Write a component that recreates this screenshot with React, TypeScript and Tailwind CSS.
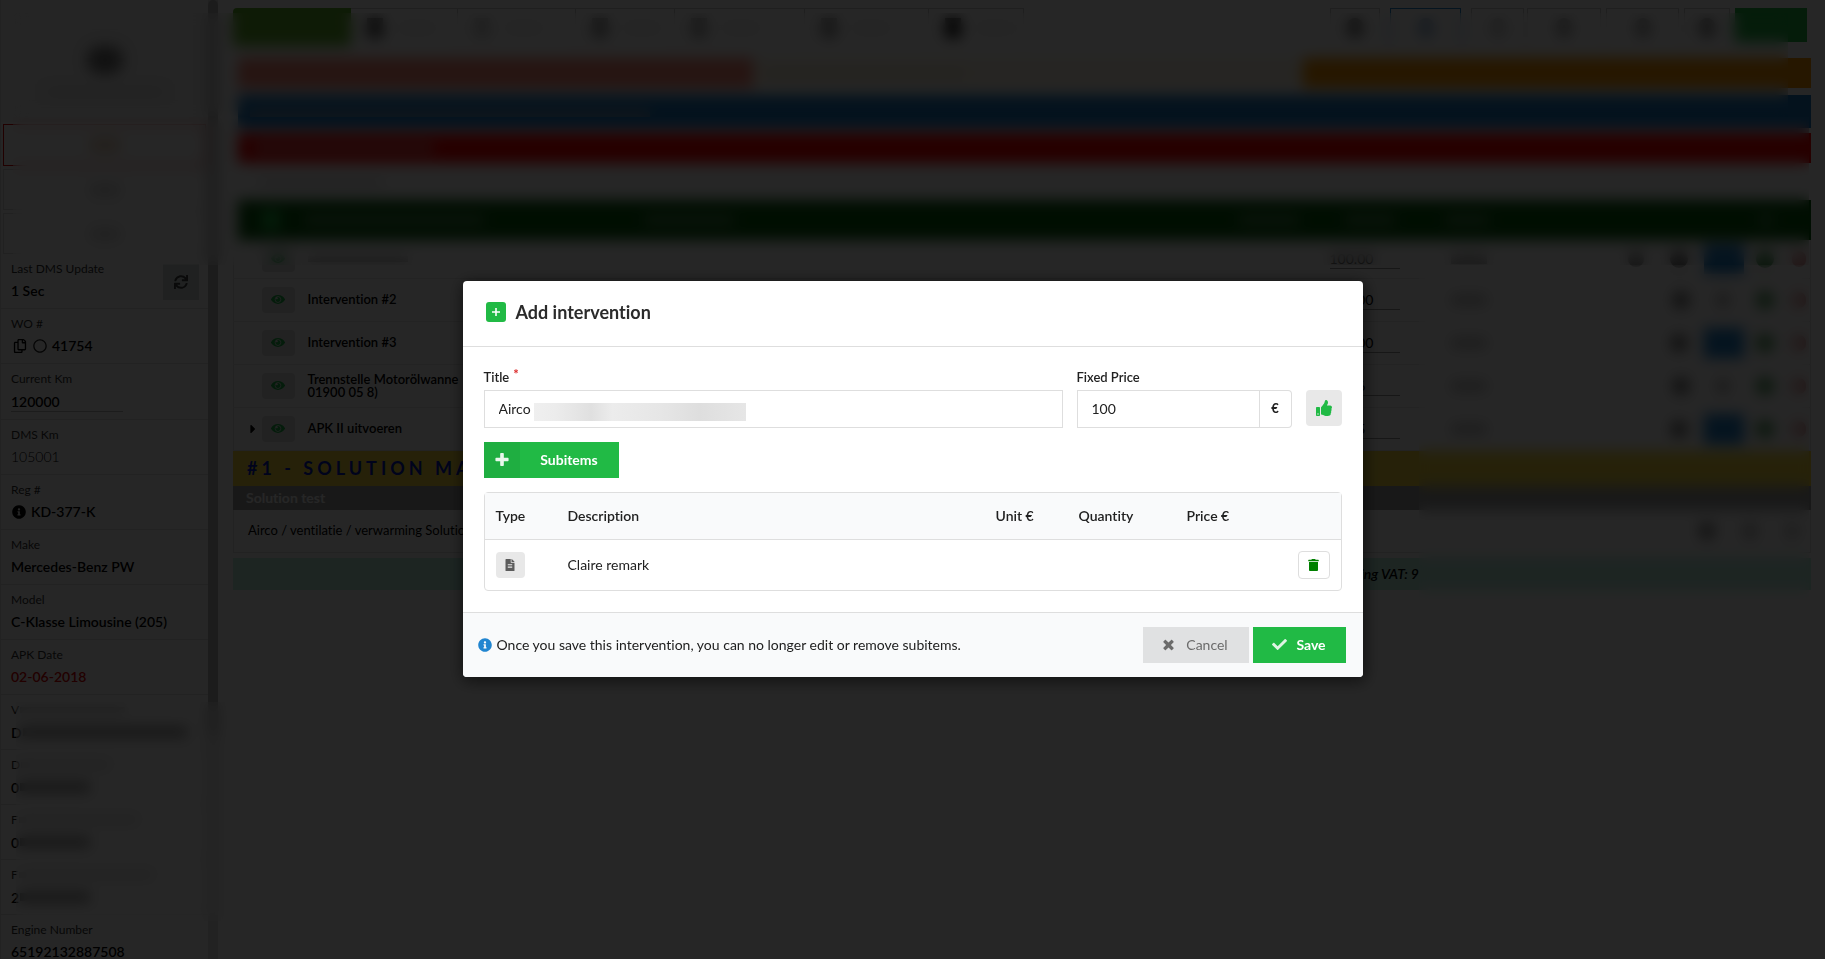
import React from "react";
import { FaSync, FaRegCopy, FaRegCircle, FaInfoCircle, FaCaretRight, FaThumbsUp, FaFileAlt, FaCheck } from "react-icons/fa";

const PLUS =
  "M448 294.2v-76.4c0-13.3-10.7-24-24-24H286.2V56c0-13.3-10.7-24-24-24h-76.4c-13.3 0-24 10.7-24 24v137.8H24c-13.3 0-24 10.7-24 24v76.4c0 13.3 10.7 24 24 24h137.8V456c0 13.3 10.7 24 24 24h76.4c13.3 0 24-10.7 24-24V318.2H424c13.3 0 24-10.7 24-24z";
const TIMES =
  "M323.1 441l53.9-53.9c9.4-9.4 9.4-24.5 0-33.9L279.8 256l97.2-97.2c9.4-9.4 9.4-24.5 0-33.9L323.1 71c-9.4-9.4-24.5-9.4-33.9 0L192 168.2 94.8 71c-9.4-9.4-24.5-9.4-33.9 0L7 124.9c-9.4 9.4-9.4 24.5 0 33.9l97.2 97.2L7 353.2c-9.4 9.4-9.4 24.5 0 33.9L60.9 441c9.4 9.4 24.5 9.4 33.9 0l97.2-97.2 97.2 97.2c9.3 9.3 24.5 9.3 33.9 0z";
const TRASH =
  "M0 84V56c0-13.3 10.7-24 24-24h112l9.4-18.7c4-8.2 12.3-13.3 21.4-13.3h114.3c9.1 0 17.4 5.1 21.5 13.3L312 32h112c13.3 0 24 10.7 24 24v28c0 6.6-5.4 12-12 12H12C5.4 96 0 90.6 0 84zm416 56v324c0 26.5-21.5 48-48 48H80c-26.5 0-48-21.5-48-48V140c0-6.6 5.4-12 12-12h360c6.6 0 12 5.4 12 12z";
const EYE =
  "M569.354 231.631C512.969 135.949 407.81 72 288 72 168.14 72 63.004 135.994 6.646 231.631a47.999 47.999 0 0 0 0 48.739C63.031 376.051 168.19 440 288 440c119.86 0 224.996-63.994 281.354-159.631a47.997 47.997 0 0 0 0-48.738zM288 392c-75.162 0-136-60.827-136-136 0-75.162 60.826-136 136-136 75.162 0 136 60.826 136 136 0 75.162-60.826 136-136 136zm104-136c0 57.438-46.562 104-104 104s-104-46.562-104-104c0-17.708 4.431-34.379 12.236-48.973l-.001.032c0 23.651 19.173 42.823 42.824 42.823s42.824-19.173 42.824-42.823c0-23.651-19.173-42.824-42.824-42.824l-.032.001C253.621 156.431 270.292 152 288 152c57.438 0 104 46.562 104 104z";

function Glyph({ d, box, className }: { d: string; box: string; className: string }) {
  return (
    <svg viewBox={box} fill="currentColor" aria-hidden="true" className={className}>
      <path d={d} />
    </svg>
  );
}

function Fact({ label, children }: { label: string; children: React.ReactNode }) {
  return (
    <div className="h-[55px] shrink-0 border-b border-[#e0e0e0] px-[10px] pt-[6px]">
      <div className="text-[12px] leading-[18px] text-[#333]">{label}</div>
      <div className="mt-[3px] flex h-[20px] items-center gap-[5px] text-[14px] font-semibold leading-[20px]">{children}</div>
    </div>
  );
}

function HiddenFact({ label, value, labelWidth, valueWidth }: { label: string; value: string; labelWidth: string; valueWidth: string }) {
  return (
    <div className="h-[55px] shrink-0 border-b border-[#e0e0e0] px-[10px] pt-[6px]">
      <div className="flex h-[18px] items-center gap-px text-[12px] text-[#333]">
        {label}
        <span className={"h-[6px] bg-[#ccc] " + labelWidth} />
      </div>
      <div className="mt-[3px] flex h-[20px] items-center gap-px text-[14px] font-semibold">
        {value}
        <span className={"h-[8px] bg-[#777] " + valueWidth} />
      </div>
    </div>
  );
}

function Sidebar() {
  return (
    <aside className="flex h-full w-[208px] shrink-0 flex-col overflow-hidden border-l border-[#e0e0e0]">
      <div className="flex h-[122px] shrink-0 flex-col items-center bg-[#f3f3f3] pt-[46px]">
        <div className="h-[28px] w-[36px] rounded-full bg-[#777]" />
        <div className="mt-[14px] h-[8px] w-[120px] bg-[#ddd]" />
      </div>
      <div className="flex shrink-0 flex-col gap-[3px] px-[2px] pt-[2px]">
        <div className="flex h-[42px] items-center justify-center border border-[#d00]">
          <span className="h-[14px] w-[30px] bg-[#ecd0b8]" />
        </div>
        <div className="flex h-[41px] items-center justify-center border border-[#ddd]">
          <span className="h-[10px] w-[30px] bg-[#ccc]" />
        </div>
        <div className="flex h-[41px] items-center justify-center border border-[#ddd]">
          <span className="h-[10px] w-[30px] bg-[#ccc]" />
        </div>
      </div>
      <div className="flex h-[55px] shrink-0 justify-between border-b border-[#e0e0e0] pl-[10px] pr-[9px] pt-[6px]">
        <div>
          <div className="text-[12px] leading-[18px] text-[#333]">Last DMS Update</div>
          <div className="mt-[3px] text-[14px] font-semibold leading-[20px]">1 Sec</div>
        </div>
        <button aria-label="Refresh" className="mt-[4px] flex h-[36px] w-[36px] items-center justify-center bg-[#d3dfdd] text-[#444]">
          <FaSync size={14} />
        </button>
      </div>
      <Fact label="WO #">
        <FaRegCopy size={14} className="ml-[2px] mr-px" />
        <FaRegCircle size={14} className="text-[#222]" />
        41754
      </Fact>
      <div className="h-[56px] shrink-0 border-b border-[#e0e0e0] px-[10px] pt-[6px]">
        <label htmlFor="current-km" className="block text-[12px] leading-[18px] text-[#333]">Current Km</label>
        <input id="current-km" defaultValue="120000" className="mt-[3px] block h-[21px] w-[112px] border-b border-[#bbb] bg-transparent text-[14px] font-semibold" />
      </div>
      <Fact label="DMS Km">
        <span className="font-light">105001</span>
      </Fact>
      <Fact label="Reg #">
        <FaInfoCircle size={14} className="ml-px" />
        KD-377-K
      </Fact>
      <Fact label="Make">Mercedes-Benz PW</Fact>
      <Fact label="Model">C-Klasse Limousine (205)</Fact>
      <Fact label="APK Date">
        <span className="text-[#e00000]">02-06-2018</span>
      </Fact>
      <HiddenFact label="V" value="D" labelWidth="w-[105px]" valueWidth="w-[164px]" />
      <HiddenFact label="D" value="0" labelWidth="w-[90px]" valueWidth="w-[70px]" />
      <HiddenFact label="F" value="0" labelWidth="w-[120px]" valueWidth="w-[70px]" />
      <HiddenFact label="F" value="2" labelWidth="w-[135px]" valueWidth="w-[70px]" />
      <Fact label="Engine Number">65192132887508</Fact>
    </aside>
  );
}

function Actions({ assigned, first }: { assigned: boolean; first?: boolean }) {
  return (
    <div className="flex items-center justify-end">
      {first && <span className="mr-[26px] h-[16px] w-[16px] rounded-full bg-[#999]" />}
      <span className="mr-[16px] h-[18px] w-[18px] rounded-full bg-[#777]" />
      {assigned ? <span className="mr-[12px] h-[30px] w-[40px] bg-[#2185d0]" /> : <span className="mr-[26px] ml-[10px] h-[14px] w-[14px] rounded-full bg-[#aaa]" />}
      <span className="mr-[18px] h-[18px] w-[18px] rounded-full bg-[#4c9a58]" />
      <span className="mr-[4px] h-[16px] w-[14px] rounded-full bg-[#e09a9a]" />
    </div>
  );
}

const interventions = [
  { title: "", price: "100.00", assigned: true, open: false },
  { title: "Intervention #2", price: "100.00", assigned: false, open: false },
  { title: "Intervention #3", price: "100.00", assigned: true, open: false },
  { title: "Trennstelle Motorölwanne\n01900 05 8)", price: "53.66", assigned: false, open: false },
  { title: "APK II uitvoeren", price: "29.95", assigned: true, open: true },
];

const tools = [
  { width: "w-[107px]", icon: "bg-[#555]" },
  { width: "w-[118px]", icon: "bg-[#ccc]" },
  { width: "w-[99px]", icon: "bg-[#999]" },
  { width: "w-[130px]", icon: "bg-[#aaa]" },
  { width: "w-[124px]", icon: "bg-[#999]" },
  { width: "w-[95px]", icon: "bg-[#222]" },
];

const options = [
  { width: "w-[50px]", look: "mr-[10px] border-[#ccc]", icon: "bg-[#777]" },
  { width: "w-[71px]", look: "mr-[10px] border-[#2185d0]", icon: "bg-[#9ab8d8]" },
  { width: "w-[53px]", look: "mr-[3px] border-[#ccc]", icon: "bg-[#ccc]" },
  { width: "w-[74px]", look: "mr-[5px] border-[#ccc]", icon: "bg-[#aaa]" },
  { width: "w-[73px]", look: "mr-[5px] border-[#ccc]", icon: "bg-[#aaa]" },
  { width: "w-[46px]", look: "mr-[5px] border-[#ccc]", icon: "bg-[#888]" },
];

function Workspace() {
  return (
    <main className="min-w-0 flex-1 pl-[15px] pr-[14px]">
      <div className="flex h-[49px] justify-between pr-[4px] pt-[8px]">
        <div className="flex h-[38px]">
          <div className="w-[118px] rounded-tl bg-[#62b32a]" />
          {tools.map((tool, i) => (
            <div key={i} className={"flex items-center gap-[16px] border-r border-t border-[#ccc] pl-[16px] " + tool.width}>
              <span className={"h-[20px] w-[16px] " + tool.icon} />
              <span className="h-[6px] w-[36px] bg-[#ddd]" />
            </div>
          ))}
        </div>
        <div className="flex h-[38px]">
          {options.map((option, i) => (
            <div key={i} className={"flex items-center justify-center border-x border-t " + option.width + " " + option.look}>
              <span className={"h-[20px] w-[16px] rounded-full " + option.icon} />
            </div>
          ))}
          <div className="h-[34px] w-[72px] bg-[#21ba45]" />
        </div>
      </div>
      <div className="pl-[5px] pt-[9px]">
        <div className="flex h-[30px]">
          <div className="flex-[519] bg-[#ff8876]" />
          <div className="flex flex-[542] items-center bg-[#fff7e6] pl-[12px]">
            <span className="h-[6px] w-[200px] bg-[#e2d8c4]" />
          </div>
          <div className="flex-[512] bg-[#ff9900]" />
        </div>
        <div className="mt-[7px] flex h-[33px] items-center bg-[#1b7ac4] pl-[12px]">
          <span className="h-[10px] w-[400px] bg-[#5a8cba]" />
        </div>
        <div className="mt-[5px] flex h-[30px] items-center bg-[#ff0000] pl-[16px]">
          <span className="h-[10px] w-[180px] bg-[#e06060]" />
        </div>
        <div className="flex h-[37px] items-center pl-[20px]">
          <span className="h-[6px] w-[126px] bg-[#d6d6d6]" />
        </div>
        <div className="flex h-[40px] items-center bg-[#065e0c]">
          <span className="ml-[24px] h-[20px] w-[18px] bg-[#21ba45]" />
          <span className="ml-[24px] h-[8px] w-[180px] bg-[#5a8f5c]" />
          <span className="ml-[160px] h-[8px] w-[90px] bg-[#5a8f5c]" />
          <span className="ml-auto mr-[46px] h-[8px] w-[60px] bg-[#5a8f5c]" />
          <span className="mr-[50px] h-[8px] w-[50px] bg-[#5a8f5c]" />
          <span className="mr-[270px] h-[8px] w-[44px] bg-[#5a8f5c]" />
          <span className="mr-[38px] h-[8px] w-[14px] bg-[#5a8f5c]" />
        </div>
      </div>
      <table className="w-full table-fixed border-x border-[#e0e0e0] text-left">
        <tbody>
          {interventions.map((row, i) => (
            <tr key={i} className={"border-b border-[#e8e8e8] " + (i === 0 ? "h-[38px]" : "h-[43px]")}>
              <td className="w-[28px] pl-[12px]">{row.open && <FaCaretRight size={14} />}</td>
              <td className="w-[46px]">
                <button aria-label="Toggle visibility" className="flex h-[26px] w-[33px] items-center justify-center rounded bg-[#e4e4e4] text-[#1db849]">
                  <Glyph d={EYE} box="0 0 576 512" className="h-[13px] w-[14px]" />
                </button>
              </td>
              <td className="whitespace-pre text-[13px] font-semibold leading-[13px]">
                {row.title || <span className="block h-[6px] w-[100px] bg-[#bbb]" />}
              </td>
              <td className="w-[121px]">
                <input aria-label="Unit price" defaultValue={row.price} className="block h-[20px] w-[70px] border-b border-[#999] bg-transparent text-[14px]" />
              </td>
              <td className="w-[360px]">
                <div className="flex items-center justify-between">
                  <span className="h-[10px] w-[36px] bg-[#bbb]" />
                  <Actions assigned={row.assigned} first={i === 0} />
                </div>
              </td>
            </tr>
          ))}
        </tbody>
      </table>
      <h2 className="flex h-[35px] items-center bg-[#fbdf40] pl-[14px] text-[18px] font-bold tracking-[4px] text-[#0018b8]">#1 - SOLUTION MA</h2>
      <div className="h-[24px] bg-[#a3a3a3] pl-[13px] text-[14px] font-bold leading-[24px] text-white">Solution test</div>
      <div className="flex h-[43px] items-center justify-between border border-t-0 border-[#e0e0e0] pl-[14px] pr-[10px] text-[13px]">
        Airco / ventilatie / verwarming Solution
        <span className="flex gap-[26px]">
          <span className="h-[18px] w-[18px] rounded-full bg-[#888]" />
          <span className="h-[18px] w-[16px] rounded-full bg-[#bbb]" />
          <span className="h-[18px] w-[16px] rounded-full bg-[#ccc]" />
        </span>
      </div>
      <div className="mt-[5px] flex h-[32px] items-center justify-end bg-[#bff5e4] pr-[392px] text-[14px] font-semibold italic">Total excluding VAT: 9</div>
    </main>
  );
}

function Dialog() {
  return (
    <section role="dialog" aria-labelledby="dialog-title" className="w-[900px] overflow-hidden rounded bg-white text-[#212121] shadow-[1px_3px_15px_2px_rgba(0,0,0,0.5)]">
      <header className="flex h-[66px] items-center gap-[10px] border-b border-[#dedede] px-[23px] pb-[2px]">
        <span className="flex h-[20px] w-[20px] items-center justify-center rounded-[3px] bg-[#21ba45]">
          <svg viewBox="0 0 10 10" className="h-[10px] w-[10px]" aria-hidden="true">
            <path d="M5 1v8M1 5h8" stroke="white" strokeWidth="1.6" />
          </svg>
        </span>
        <h1 id="dialog-title" className="text-[18px] font-bold leading-[24px] text-[#2b2b2b]">Add intervention</h1>
      </header>

      <div className="px-[21px] pb-[21px] pt-[21px]">
        <div className="flex items-end gap-[14px]">
          <div className="min-w-0 flex-1">
            <label htmlFor="title" className="flex h-[22px] gap-[4px] text-[13px] font-semibold leading-[18px]">
              Title<span className="-mt-[3px] font-bold text-[#db2828]">*</span>
            </label>
            <div className="relative">
              <input id="title" defaultValue="Airco" className="block h-[38px] w-full border border-[#dedede] px-[14px] text-[14px]" />
              <div className="absolute left-[50px] top-[13px] h-[18px] w-[212px] bg-[linear-gradient(90deg,#efefef_0%,#ececec_10%,#e0e0e0_27%,#ececec_37%,#e6e6e6_60%,#dedede_78%,#e6e6e6_100%)]" />
            </div>
          </div>
          <div className="w-[215px]">
            <label htmlFor="price" className="block h-[22px] text-[13px] font-semibold leading-[18px]">Fixed Price</label>
            <div className="flex">
              <input id="price" defaultValue="100" className="h-[38px] min-w-0 flex-1 border border-[#dedede] px-[14px] text-[14px]" />
              <span className="flex h-[38px] w-[32px] items-center justify-center rounded-r border border-l-0 border-[#dedede] text-[13px] font-bold">€</span>
            </div>
          </div>
          <button aria-label="Approve" className="mb-[2px] flex h-[36px] w-[36px] items-center justify-center rounded bg-[#e8e8e8] text-[#21ba45]">
            <FaThumbsUp size={16} />
          </button>
        </div>

        <button className="mt-[14px] flex h-[36px] w-[135px] items-center bg-[#21ba45] text-[14px] font-bold text-white">
          <span className="flex h-full w-[36px] items-center justify-center bg-[#1fae41]">
            <Glyph d={PLUS} box="0 0 448 512" className="h-[15px] w-[14px] opacity-90" />
          </span>
          <span className="flex-1 text-center">Subitems</span>
        </button>

        <div className="mt-[14px] rounded border border-[#dedede]">
          <table className="w-full table-fixed text-left text-[14px]">
            <thead className="h-[47px] bg-[#f9fafb]">
              <tr className="border-b border-[#dedede]">
                <th scope="col" className="w-[72px] pl-[11px] font-semibold">Type</th>
                <th scope="col" className="pl-[11px] font-semibold">Description</th>
                <th scope="col" className="w-[83px] pl-[11px] font-semibold">Unit €</th>
                <th scope="col" className="w-[108px] pl-[11px] font-semibold">Quantity</th>
                <th scope="col" className="w-[100px] pl-[11px] font-semibold">Price €</th>
                <td className="w-[65px]" />
              </tr>
            </thead>
            <tbody>
              <tr className="h-[50px]">
                <td className="pl-[11px]">
                  <span className="flex h-[26px] w-[29px] items-center justify-center rounded bg-[#e8e8e8] text-[#5c5c5c]">
                    <FaFileAlt size={12} />
                  </span>
                </td>
                <td className="pl-[11px]">Claire remark</td>
                <td />
                <td />
                <td />
                <td className="pr-[11px]">
                  <button aria-label="Remove subitem" className="ml-auto flex h-[28px] w-[32px] items-center justify-center rounded border border-[#dedede] text-[#008000]">
                    <Glyph d={TRASH} box="0 0 448 512" className="h-[12px] w-[11px]" />
                  </button>
                </td>
              </tr>
            </tbody>
          </table>
        </div>
      </div>

      <footer className="flex h-[65px] items-center border-t border-[#dedede] bg-[#f9fafb] pl-[15px] pr-[17px]">
        <FaInfoCircle size={14} className="mr-[5px] text-[#2185d0]" />
        <p className="text-[14px]">Once you save this intervention, you can no longer edit or remove subitems.</p>
        <button className="ml-auto flex h-[36px] w-[106px] items-center justify-center gap-[12px] bg-[#e0e1e2] text-[14px] text-[#6b6b6b]">
          <Glyph d={TIMES} box="0 0 384 512" className="h-[14px] w-[11px]" />
          Cancel
        </button>
        <button className="ml-[4px] flex h-[36px] w-[93px] items-center justify-center gap-[9px] bg-[#21ba45] text-[14px] font-bold text-white">
          <FaCheck size={15} className="opacity-85" />
          Save
        </button>
      </footer>
    </section>
  );
}

export default function App() {
  return (
    <div className="relative h-screen min-h-[700px] overflow-hidden bg-white font-['Lato',sans-serif] text-black [font-variant-ligatures:none]">
      <div className="flex h-full">
        <Sidebar />
        <div className="flex w-[10px] shrink-0 flex-col bg-[#e0e0e0]">
          <div className="h-[735px] rounded-t-full bg-[#bcbcbc]" />
        </div>
        <Workspace />
      </div>

      {/* frosted panes over confidential data */}
      <div className="absolute left-[13px] right-[37px] top-[13px] h-[104px] backdrop-blur-[7px]" />
      <div className="absolute left-[13px] right-[16px] top-[117px] h-[148px] backdrop-blur-[7px]" />
      <div className="absolute left-[1419px] right-[16px] top-[265px] h-[345px] backdrop-blur-[7px]" />
      <div className="absolute left-[16px] top-[702px] h-[219px] w-[214px] backdrop-blur-[7px]" />

      <div className="absolute inset-0 flex items-center justify-center bg-black/85 pb-[2px]">
        <Dialog />
      </div>
    </div>
  );
}
